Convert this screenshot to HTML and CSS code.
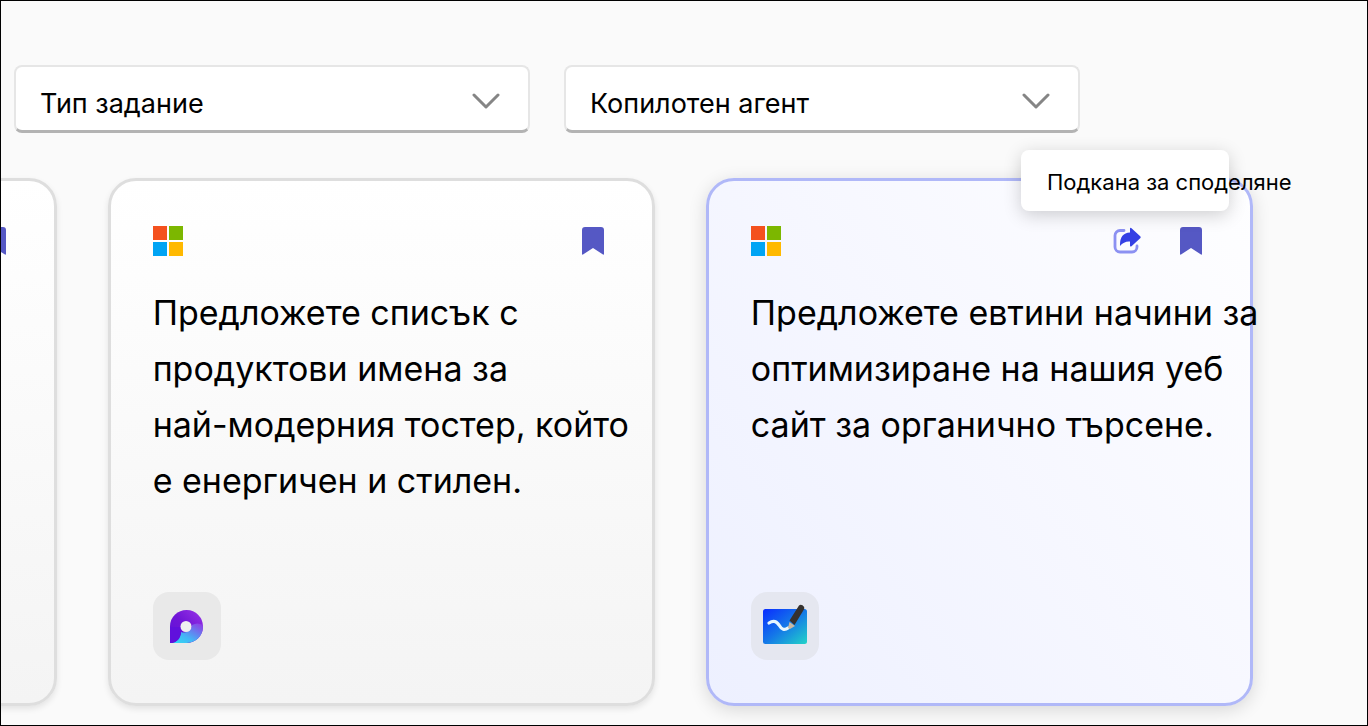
FILE: index.html
```html
<!DOCTYPE html>
<html lang="bg">
<head>
<meta charset="utf-8">
<title>Подкани</title>
<meta name="viewport" content="width=device-width, initial-scale=1">
<link rel="stylesheet" href="styles.css">
</head>
<body>
<svg class="defs" width="0" height="0" aria-hidden="true">
  <symbol id="bookmark" viewBox="0 0 22 28">
    <path d="M3 0h16a3 3 0 0 1 3 3v24q0 1-1 .5L11 21 1 27.500Q0 28 0 27V3a3 3 0 0 1 3-3z" fill="#5558c4"/>
  </symbol>
  <symbol id="microsoft" viewBox="0 0 30 30">
    <path d="M0 0h14v14H0z" fill="#f4511e"/>
    <path d="M16 0h14v14H16z" fill="#7cb700"/>
    <path d="M0 16h14v14H0z" fill="#00a4f4"/>
    <path d="M16 16h14v14H16z" fill="#ffb900"/>
  </symbol>
</svg>
<main class="frame">
  <form class="filters">
    <div class="filter">
      <select class="filter-select" aria-label="Тип задание"><option>Тип задание</option></select>
      <svg class="chevron" viewBox="0 0 28 16" aria-hidden="true"><path d="M2 2l12 12L26 2"/></svg>
    </div>
    <div class="filter">
      <select class="filter-select" aria-label="Копилотен агент"><option>Копилотен агент</option></select>
      <svg class="chevron" viewBox="0 0 28 16" aria-hidden="true"><path d="M2 2l12 12L26 2"/></svg>
    </div>
  </form>
  <section class="cards">
    <article class="card">
      <header class="card-head">
        <svg class="brand" aria-hidden="true"><use href="#microsoft"/></svg>
        <button class="icon-button" type="button" aria-label="Запазване"><svg class="bookmark"><use href="#bookmark"/></svg></button>
      </header>
    </article>
    <article class="card">
      <header class="card-head">
        <svg class="brand" aria-hidden="true"><use href="#microsoft"/></svg>
        <button class="icon-button" type="button" aria-label="Запазване"><svg class="bookmark"><use href="#bookmark"/></svg></button>
      </header>
      <p class="prompt">Предложете списък с<br>продуктови имена за<br>най-модерния тостер, който<br>е енергичен и стилен.</p>
      <div class="app">
        <svg class="app-icon" viewBox="0 0 44 44" aria-hidden="true">
          <defs>
            <linearGradient id="loop-a" x1="0" y1="1" x2="1" y2="0"><stop offset="0" stop-color="#5b12dc"/><stop offset=".5" stop-color="#7015d6"/><stop offset="1" stop-color="#9a35e8"/></linearGradient>
            <linearGradient id="loop-b" x1="0" y1="1" x2=".9" y2="0"><stop offset="0" stop-color="#2fe0f2"/><stop offset=".4" stop-color="#44b4f6"/><stop offset="1" stop-color="#8f3ee6"/></linearGradient>
          </defs>
          <path d="M5 39V22a16.500 16.500 0 1 1 16.500 17z" fill="url(#loop-a)"/>
          <path d="M7 39q8-2 9-11a8 8 0 0 0 11-7q5-3 11 0a16.500 16.500 0 0 1-16.500 18z" fill="url(#loop-b)"/>
          <path d="M5 39V23h11v7q-2 8-9 9z" fill="#6010dc"/>
          <circle cx="21" cy="22.500" r="5.500" fill="#efeff0"/>
        </svg>
      </div>
    </article>
    <article class="card card-active">
      <header class="card-head">
        <svg class="brand" aria-hidden="true"><use href="#microsoft"/></svg>
        <div class="actions">
          <button class="icon-button" type="button" aria-label="Споделяне" aria-describedby="share-tip">
            <svg class="share" viewBox="0 0 28 28">
              <path d="M11 3.500H7a5 5 0 0 0-5 5V20a5 5 0 0 0 5 5h12a5 5 0 0 0 5-5v-1" fill="none" stroke="#8c91f2" stroke-width="2.800" stroke-linecap="round"/>
              <path d="M17 2q0-2 1.500-.8l8.700 8q1 1 0 2l-8.700 8Q17 20 17 18.500v-4q-6-.5-10 4.500Q6.500 6 17 5.500z" fill="#3440e4"/>
            </svg>
          </button>
          <button class="icon-button" type="button" aria-label="Запазване"><svg class="bookmark"><use href="#bookmark"/></svg></button>
        </div>
      </header>
      <div class="tooltip" role="tooltip" id="share-tip">Подкана за споделяне</div>
      <p class="prompt">Предложете евтини начини за<br>оптимизиране на нашия уеб<br>сайт за органично търсене.</p>
      <div class="app">
        <svg class="app-icon" viewBox="0 0 44 44" aria-hidden="true">
          <defs><linearGradient id="board" x1="0" y1="0" x2="1" y2="1"><stop offset="0" stop-color="#0a2cff"/><stop offset=".5" stop-color="#1478e8"/><stop offset="1" stop-color="#22d4c8"/></linearGradient></defs>
          <rect x="0" y="5" width="44" height="35" rx="2.500" fill="url(#board)"/>
          <path d="M6 19q6-4 10 2 4 7 9 3" fill="none" stroke="#e7f6ff" stroke-width="3.200" stroke-linecap="round"/>
          <path d="M25 24l1.500-6 5.500 4-5 3z" fill="#c9b8a2"/>
          <path d="M26.500 16.500L36 1.500q1.500-1.500 3.500-.2 2.500 1.500 1.700 3.700L31.500 21z" fill="#35312f"/>
        </svg>
      </div>
    </article>
  </section>
</main>
</body>
</html>
```
FILE: styles.css
```css
* {
  box-sizing: border-box;
}

body {
  margin: 0;
  font-family: Inter, "Liberation Sans", sans-serif;
  color: #000;
}

.defs {
  position: absolute;
}

.frame {
  min-height: 100vh;
  padding-top: 64px;
  border: 1px solid #000;
  background: #fafafa;
  overflow: hidden;
}

.filters {
  display: flex;
  gap: 34px;
  padding: 0 13px;
}

.filter {
  display: grid;
  flex: 0 1 516px;
  align-items: center;
}

.filter-select,
.chevron {
  grid-area: 1 / 1;
}

.filter-select {
  width: 100%;
  height: 68px;
  padding: 10px 64px 0 24px;
  appearance: none;
  border: 2px solid #e6e6e6;
  border-bottom: 3px solid #b3b3b3;
  border-radius: 8px;
  background: #fff;
  color: #000;
  font: 27px/32px Inter, "Liberation Sans", sans-serif;
}

.chevron {
  justify-self: end;
  width: 28px;
  height: 16px;
  margin: 4px 30px 0 0;
  fill: none;
  stroke: #858585;
  stroke-width: 3;
  stroke-linecap: round;
  stroke-linejoin: round;
  pointer-events: none;
}

.cards {
  display: flex;
  justify-content: flex-end;
  gap: 51px;
  padding: 45px 114px 16px 0;
}

.card {
  position: relative;
  display: flex;
  flex: 0 0 40vw;
  flex-direction: column;
  min-width: 0;
  min-height: 528px;
  padding: 43px 43px 43px 42px;
  border: 3px solid #dedede;
  border-radius: 28px;
  background: linear-gradient(#fff, #f4f4f4);
  box-shadow: 0 3px 6px #00000018;
}

.card-active {
  border-color: #b0b8f8;
  background: linear-gradient(52deg, #edf0ff, #f6f7ff 50%, #fefeff);
  box-shadow: 0 4px 18px #00000024;
}

.card-head {
  display: flex;
  align-items: center;
  justify-content: space-between;
  height: 34px;
}

.brand {
  width: 30px;
  height: 30px;
}

.actions {
  display: flex;
  gap: 39px;
}

.icon-button {
  display: flex;
  align-items: center;
  padding: 0;
  border: 0;
  background: none;
}

.card .icon-button:last-child {
  margin-right: 5px;
}

.bookmark {
  width: 22px;
  height: 28px;
}

.share {
  width: 28px;
  height: 28px;
}

.prompt {
  margin: 27px 0 0;
  font-size: 34px;
  line-height: 56px;
  white-space: nowrap;
}

.app {
  display: flex;
  align-items: center;
  justify-content: center;
  width: 68px;
  height: 68px;
  margin-top: auto;
  border-radius: 16px;
  background: #e9e9e9;
}

.card-active .app {
  background: #e5e7f0;
}

.app-icon {
  width: 44px;
  height: 44px;
}

.tooltip {
  position: absolute;
  top: -31px;
  right: 21px;
  width: 208px;
  padding: 17px 26px 14px;
  border-radius: 8px;
  background: #fff;
  box-shadow: 0 4px 18px #00000030;
  font-size: 22px;
  line-height: 30px;
  white-space: nowrap;
}
```
